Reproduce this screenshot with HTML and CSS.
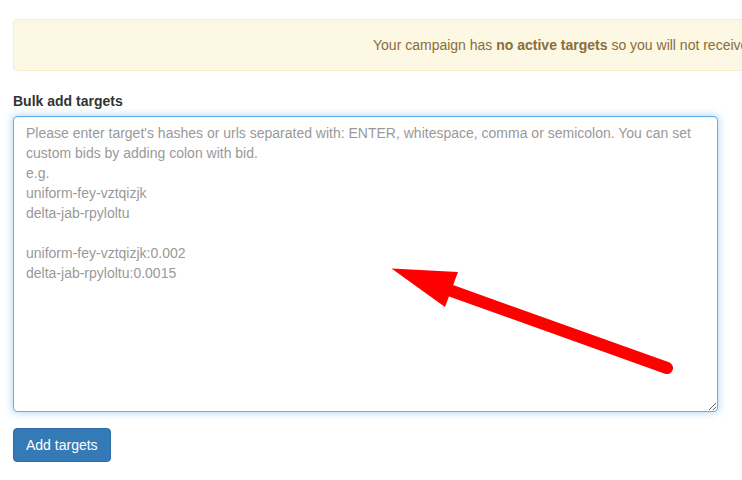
FILE: index.html
```html
<!DOCTYPE html>
<html>
<head>
<meta charset="utf-8">
<link rel="stylesheet" href="styles.css">
</head>
<body>
<div class="page">
  <div class="alert">Your campaign has <b>no active targets</b> so you will not receive any traffic until you add some targets.</div>
  <div class="form-group">
    <label class="label" for="targets">Bulk add targets</label>
    <textarea id="targets" class="textarea" placeholder="Please enter target's hashes or urls separated with: ENTER, whitespace, comma or semicolon. You can set custom bids by adding colon with bid.&#10;e.g.&#10;uniform-fey-vztqizjk&#10;delta-jab-rpyloltu&#10;&#10;uniform-fey-vztqizjk:0.002&#10;delta-jab-rpyloltu:0.0015"></textarea>
  </div>
  <button class="btn">Add targets</button>
</div>
<svg class="arrow" width="742" height="480" viewBox="0 0 742 480">
  <line x1="449" y1="290" x2="667" y2="368" stroke="#ff0000" stroke-width="12" stroke-linecap="round"/>
  <polygon points="391.5,268.5 458,272 445,307" fill="#ff0000"/>
</svg>
</body>
</html>
```
FILE: styles.css
```css
html, body {
  margin: 0;
  padding: 0;
  background: #ffffff;
  overflow: hidden;
}
body {
  font-family: "Liberation Sans", Arial, sans-serif;
  font-size: 14px;
  line-height: 20px;
  color: #333333;
  width: 742px;
  height: 480px;
  position: relative;
}
.page {
  padding: 19px 0 0 13px;
  width: 705px;
  display: flex;
  flex-direction: column;
  align-items: flex-start;
}
.alert {
  box-sizing: border-box;
  width: 1100px;
  flex-shrink: 0;
  margin-right: -395px;
  padding: 15px 15px 15px 359px;
  background: #fcf8e3;
  border: 1px solid #faebcc;
  border-radius: 4px;
  color: #8a6d3b;
  margin-bottom: 20px;
  white-space: nowrap;
}
.alert b {
  font-weight: bold;
}
.form-group {
  display: flex;
  flex-direction: column;
  width: 100%;
  margin-bottom: 16px;
}
.label {
  font-weight: bold;
  margin-bottom: 5px;
  display: block;
}
.textarea {
  box-sizing: border-box;
  width: 705px;
  height: 296px;
  margin: 0;
  padding: 6px 12px;
  font-family: "Liberation Sans", Arial, sans-serif;
  font-size: 14px;
  line-height: 20px;
  color: #555555;
  border: 1px solid #66afe9;
  border-radius: 4px;
  outline: none;
  box-shadow: inset 0 1px 1px rgba(0,0,0,0.075), 0 0 8px rgba(102,175,233,0.6);
  resize: vertical;
}
.textarea::placeholder {
  color: #999999;
  opacity: 1;
}
.btn {
  font-family: "Liberation Sans", Arial, sans-serif;
  font-size: 14px;
  line-height: 20px;
  padding: 6px 12px;
  color: #ffffff;
  background: #337ab7;
  border: 1px solid #2e6da4;
  border-radius: 4px;
  margin: 0;
  cursor: pointer;
}
.arrow {
  position: absolute;
  left: 0;
  top: 0;
  pointer-events: none;
}
```
